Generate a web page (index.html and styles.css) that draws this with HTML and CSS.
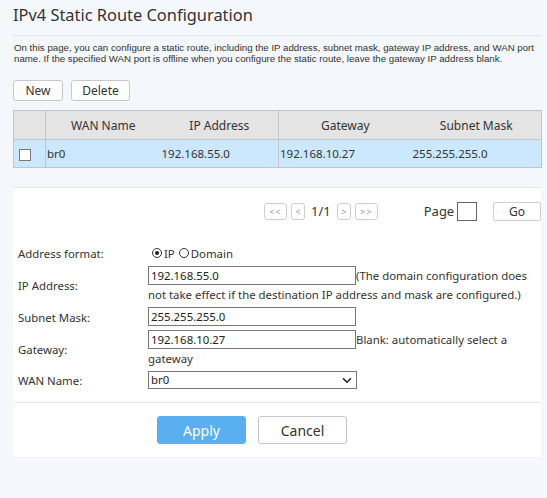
FILE: index.html
```html
<!DOCTYPE html>
<html>
<head>
<meta charset="utf-8">
<link rel="stylesheet" href="styles.css">
</head>
<body>
<div class="page">
  <h1 class="title">IPv4 Static Route Configuration</h1>
  <p class="desc">On this page, you can configure a static route, including the IP address, subnet mask, gateway IP address, and WAN port name. If the specified WAN port is offline when you configure the static route, leave the gateway IP address blank.</p>
  <div class="toolbar">
    <button class="btn">New</button>
    <button class="btn">Delete</button>
  </div>
  <table class="list">
    <colgroup>
      <col class="c-chk"><col class="c-wan"><col class="c-ip"><col class="c-gw"><col class="c-mask">
    </colgroup>
    <thead>
      <tr>
        <th class="bd"></th>
        <th>WAN Name</th>
        <th class="bd">IP Address</th>
        <th>Gateway</th>
        <th>Subnet Mask</th>
      </tr>
    </thead>
    <tbody>
      <tr class="sel">
        <td class="bd"><span class="chk"></span></td>
        <td>br0</td>
        <td class="bd">192.168.55.0</td>
        <td>192.168.10.27</td>
        <td>255.255.255.0</td>
      </tr>
    </tbody>
  </table>
  <div class="panel">
    <div class="pager">
      <div class="nav">
        <span class="pbtn">&lt;&lt;</span>
        <span class="pbtn sm">&lt;</span>
        <span class="pnum">1/1</span>
        <span class="pbtn sm">&gt;</span>
        <span class="pbtn">&gt;&gt;</span>
      </div>
      <div class="goto">
        <span class="plabel">Page</span>
        <span class="pinput"></span>
      </div>
      <span class="gobtn">Go</span>
    </div>
    <div class="form">
      <div class="lbl r-fmt">Address format:</div>
      <div class="val r-fmt">
        <label class="radio"><span class="dot on"></span>IP</label>
        <label class="radio"><span class="dot"></span>Domain</label>
      </div>
      <div class="lbl r-ip">IP Address:</div>
      <div class="val r-ip">
        <div class="line"><span class="field">192.168.55.0</span><span class="help">(The domain configuration does</span></div>
        <div class="help-more">not take effect if the destination IP address and mask are configured.)</div>
      </div>
      <div class="lbl r-mask">Subnet Mask:</div>
      <div class="val r-mask"><span class="field">255.255.255.0</span></div>
      <div class="lbl r-gw">Gateway:</div>
      <div class="val r-gw">
        <div class="line"><span class="field">192.168.10.27</span><span class="help">Blank: automatically select a</span></div>
        <div class="help-more">gateway</div>
      </div>
      <div class="lbl r-wan">WAN Name:</div>
      <div class="val r-wan"><span class="field select">br0<svg class="chev" width="10" height="7" viewBox="0 0 10 7"><path d="M1 1.2 L5 5.2 L9 1.2" fill="none" stroke="#222" stroke-width="1.6"/></svg></span></div>
    </div>
    <div class="actions">
      <button class="abtn apply">Apply</button>
      <button class="abtn cancel">Cancel</button>
    </div>
  </div>
</div>
</body>
</html>
```
FILE: styles.css
```css
html, body {
  margin: 0;
  padding: 0;
  background: #f4f7fb;
}
body {
  font-family: "Noto Sans", "Open Sans", sans-serif;
  color: #333;
  font-size: 12px;
}
.page {
  width: 528px;
  padding: 0 0 0 13px;
}
.title {
  margin: 0;
  padding-top: 3px;
  height: 32px;
  font-size: 16.4px;
  font-weight: normal;
  line-height: 24px;
  color: #333;
  border-bottom: 1px solid #e3e7ed;
}
.desc {
  margin: 0;
  padding: 6px 1px 0;
  font-family: "Liberation Sans", Arial, sans-serif;
  font-size: 9.7px;
  line-height: 11px;
  color: #333;
  height: 38px;
}
.toolbar {
  display: flex;
  gap: 8px;
  height: 30px;
}
.btn {
  font-family: inherit;
  font-size: 12px;
  color: #333;
  background: #fff;
  border: 1px solid #c8c8c8;
  border-radius: 3px;
  height: 21px;
  padding: 0;
  width: 50px;
  line-height: 18px;
}
.btn + .btn { width: 59px; }
.list {
  width: 528px;
  border-collapse: collapse;
  table-layout: fixed;
  border: 1px solid #c6c6c6;
}
.c-chk { width: 32px; }
.c-wan { width: 115px; }
.c-ip { width: 118px; }
.c-gw { width: 133px; }
.c-mask { width: 130px; }
.list th {
  background: #e4e4e4;
  font-weight: normal;
  height: 28px;
  padding: 0;
  text-align: center;
  font-size: 12px;
  color: #333;
}
.list td {
  background: #cce8ff;
  height: 27px;
  padding: 0 0 0 1px;
  font-size: 11.5px;
  border-top: 1px solid #c6c6c6;
}
.list .bd { border-right: 1px solid #c6c6c6; }
.chk {
  display: inline-block;
  width: 10px;
  height: 10px;
  background: #fff;
  border: 1px solid #7a7a7a;
  margin-left: 4px;
  vertical-align: middle;
}
.panel {
  margin-top: 19px;
  background: #fff;
  border-top: 1px solid #e6e9ee;
  padding: 13px 0 13px;
}
.pager {
  display: flex;
  align-items: center;
  height: 20px;
}
.nav {
  display: flex;
  align-items: center;
  gap: 4px;
  margin-left: 251px;
}
.pbtn {
  box-sizing: border-box;
  width: 23px;
  height: 17px;
  border: 1px solid #cfcfcf;
  border-radius: 3px;
  font-size: 9px;
  color: #999;
  display: flex;
  align-items: center;
  justify-content: center;
  letter-spacing: 1px;
}
.pbtn.sm { width: 14px; letter-spacing: 0; }
.pnum {
  font-size: 13px;
  margin: 0 2px;
}
.goto {
  display: flex;
  align-items: center;
  gap: 3px;
  margin-left: 46px;
}
.plabel { font-size: 13px; }
.pinput {
  box-sizing: border-box;
  width: 20px;
  height: 19px;
  border: 1px solid #666;
}
.gobtn {
  box-sizing: border-box;
  margin-left: auto;
  width: 48px;
  height: 19px;
  border: 1px solid #cfcfcf;
  border-radius: 2px;
  display: flex;
  align-items: center;
  justify-content: center;
  font-size: 12px;
}
.form {
  display: grid;
  grid-template-columns: 130px 384px;
  padding: 22px 0 0 5px;
  margin-bottom: 12px;
  row-gap: 3px;
  font-size: 11.4px;
}
.lbl {
  display: flex;
  align-items: center;
}
.val {
  line-height: 19px;
}
.line {
  display: flex;
  align-items: center;
  height: 19px;
}
.help-more {
  height: 19px;
}
.r-fmt { height: 20px; }
.r-fmt.val { display: flex; align-items: center; gap: 4px; padding-left: 4px; }
.val.r-mask { height: 20px; }
.radio { display: inline-flex; align-items: center; gap: 2px; }
.dot {
  box-sizing: border-box;
  width: 10px;
  height: 10px;
  border-radius: 50%;
  border: 1px solid #333;
  position: relative;
}
.dot.on::after {
  content: "";
  position: absolute;
  left: 2px;
  top: 2px;
  width: 4px;
  height: 4px;
  border-radius: 50%;
  background: #222;
}
.field {
  box-sizing: border-box;
  display: inline-block;
  vertical-align: top;
  width: 208px;
  height: 19px;
  border: 1px solid #767676;
  padding-left: 2px;
  line-height: 17px;
  color: #222;
}
.select {
  width: 209px;
  height: 18px;
  position: relative;
  line-height: 16px;
}
.chev {
  position: absolute;
  right: 4px;
  top: 5px;
}
.actions {
  border-top: 1px solid #e8e8e8;
  padding: 13px 0 0 144px;
  display: flex;
  gap: 12px;
}
.abtn {
  font-family: inherit;
  width: 89px;
  height: 28px;
  border-radius: 3px;
  font-size: 14px;
  padding: 0;
}
.apply {
  background: #5aaff0;
  border: 1px solid #5aaff0;
  color: #fff;
}
.cancel {
  background: #fff;
  border: 1px solid #c8c8c8;
  color: #333;
}
```
